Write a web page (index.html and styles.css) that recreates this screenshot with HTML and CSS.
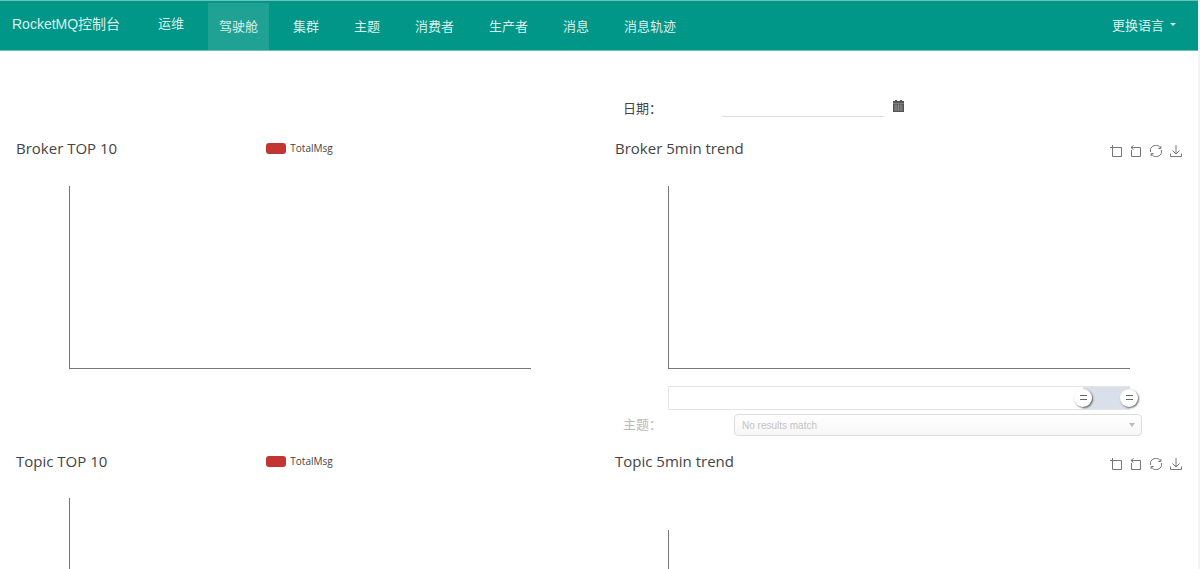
FILE: index.html
```html
<!DOCTYPE html>
<html lang="zh-CN">
<head>
    <meta charset="UTF-8">
    <meta name="viewport" content="width=device-width, initial-scale=1.0">
    <title>RocketMQ控制台</title>
    <link rel="stylesheet" href="styles.css">
</head>
<body>

<svg class="icon-defs" aria-hidden="true">
    <symbol id="icon-zoom" viewBox="0 0 12 12">
        <path d="M0 2.5h11.5v9h-9V0"/>
    </symbol>
    <symbol id="icon-back" viewBox="0 0 12 12">
        <path d="M1.5 5v6.5h9v-9H1M3.5 0.5l-2.5 2 2.5 2"/>
    </symbol>
    <symbol id="icon-restore" viewBox="0 0 12 12">
        <path d="M0.6 7A5.4 5.4 0 0 1 10.6 3.2M11.4 5A5.4 5.4 0 0 1 1.4 8.8M8.4 3.5h2.4V1M3.6 8.5H1.2V11"/>
    </symbol>
    <symbol id="icon-save" viewBox="0 0 12 12">
        <path d="M6 0v8.5M2.5 5.5L6 9l3.5-3.5M0.5 8.5v3h11v-3"/>
    </symbol>
</svg>

<nav class="navbar">
    <a class="brand" href="#">RocketMQ控制台</a>
    <ul class="nav-list">
        <li><a class="nav-link nav-ops" href="#">运维</a></li>
        <li><a class="nav-link active" href="#">驾驶舱</a></li>
        <li><a class="nav-link" href="#">集群</a></li>
        <li><a class="nav-link" href="#">主题</a></li>
        <li><a class="nav-link" href="#">消费者</a></li>
        <li><a class="nav-link" href="#">生产者</a></li>
        <li><a class="nav-link" href="#">消息</a></li>
        <li><a class="nav-link" href="#">消息轨迹</a></li>
    </ul>
    <button class="lang-button" type="button">更换语言<span class="caret"></span></button>
</nav>

<main class="dashboard">
    <form class="date-form">
        <label for="date">日期：</label>
        <input id="date" class="date-input" type="text">
        <button class="date-button" type="button" aria-label="日期">
            <svg viewBox="0 0 11 12">
                <path class="cal-body" d="M0 1h2V0h2v1h3V0h2v1h2v11H0z"/>
                <path class="cal-lines" d="M0 3.5h11M1 6h9M1 8h9M1 10h9M3 4v7M5.5 4v7M8 4v7"/>
            </svg>
        </button>
    </form>

    <div class="row">
        <section class="chart">
            <div class="chart-head">
                <h2>Broker TOP 10</h2>
                <span class="legend">TotalMsg</span>
            </div>
            <div class="plot"></div>
        </section>

        <section class="chart">
            <div class="chart-head">
                <h2>Broker 5min trend</h2>
                <div class="toolbox">
                    <button type="button" aria-label="Zoom"><svg><use href="#icon-zoom"/></svg></button>
                    <button type="button" aria-label="Zoom reset"><svg><use href="#icon-back"/></svg></button>
                    <button type="button" aria-label="Restore"><svg><use href="#icon-restore"/></svg></button>
                    <button type="button" aria-label="Save"><svg><use href="#icon-save"/></svg></button>
                </div>
            </div>
            <div class="plot"></div>
            <div class="data-zoom">
                <div class="data-zoom-range"></div>
                <input type="range" min="0" max="100" value="90" aria-label="Start">
                <input type="range" min="0" max="100" value="100" aria-label="End">
            </div>
            <form class="topic-form">
                <label for="topic">主题：</label>
                <div class="select-wrap">
                    <select id="topic" disabled>
                        <option>No results match</option>
                    </select>
                </div>
            </form>
        </section>
    </div>

    <div class="row row-fill">
        <section class="chart">
            <div class="chart-head">
                <h2>Topic TOP 10</h2>
                <span class="legend">TotalMsg</span>
            </div>
            <div class="plot plot-open"></div>
        </section>

        <section class="chart">
            <div class="chart-head">
                <h2>Topic 5min trend</h2>
                <div class="toolbox">
                    <button type="button" aria-label="Zoom"><svg><use href="#icon-zoom"/></svg></button>
                    <button type="button" aria-label="Zoom reset"><svg><use href="#icon-back"/></svg></button>
                    <button type="button" aria-label="Restore"><svg><use href="#icon-restore"/></svg></button>
                    <button type="button" aria-label="Save"><svg><use href="#icon-save"/></svg></button>
                </div>
            </div>
            <div class="plot plot-open plot-low"></div>
        </section>
    </div>
</main>

</body>
</html>
```
FILE: styles.css
```css
* {
    box-sizing: border-box;
}

body {
    display: flex;
    flex-direction: column;
    min-height: 100vh;
    margin: 0;
    border-right: 2px solid #f1f5f7;
    background-color: #fff;
    color: #444;
    font-family: "Liberation Sans", "Noto Sans CJK SC", sans-serif;
    font-size: 13px;
}

button {
    padding: 0;
    border: none;
    background: none;
    font: inherit;
    color: inherit;
    cursor: pointer;
}

.icon-defs {
    display: none;
}

/* Navbar */
.navbar {
    display: flex;
    height: 51px;
    padding: 0 22px 0 12px;
    border-top: 1px solid #6fc0b8;
    border-bottom: 1px solid #6fc0b8;
    background-color: #009688;
    color: #d9efed;
}

.brand {
    width: 135px;
    color: inherit;
    font-size: 14px;
    line-height: 46px;
    text-decoration: none;
    white-space: nowrap;
}

.nav-list {
    display: flex;
    flex: 1;
    gap: 13px;
    margin: 0;
    padding: 0;
    list-style: none;
}

.nav-link {
    display: block;
    margin-top: 2px;
    padding: 0 11px;
    color: inherit;
    line-height: 47px;
    text-decoration: none;
    white-space: nowrap;
}

.nav-link.nav-ops {
    margin-top: 0;
    line-height: 46px;
}

.nav-link.active {
    background-color: #1fa194;
}

.lang-button {
    display: flex;
    align-items: center;
    gap: 6px;
    height: 46px;
}

.caret {
    border-top: 3px solid currentColor;
    border-left: 3px solid transparent;
    border-right: 3px solid transparent;
}

/* Dashboard */
.dashboard {
    display: flex;
    flex: 1;
    flex-direction: column;
}

.date-form {
    display: flex;
    align-items: flex-end;
    height: 66px;
    margin-left: 50%;
    padding-left: 24px;
}

.date-form label,
.topic-form label {
    line-height: 16px;
}

.date-form label {
    width: 99px;
}

.date-input {
    width: 162px;
    height: 22px;
    padding: 0;
    border: none;
    border-bottom: 1px solid #ddd;
    outline: none;
    font: inherit;
}

.date-button {
    align-self: flex-end;
    height: 12px;
    margin: 0 0 5px 9px;
}

.date-button svg {
    display: block;
    width: 11px;
    height: 12px;
}

.cal-body {
    fill: #555;
}

.cal-lines {
    fill: none;
    stroke: #aaa;
    stroke-width: 0.5;
}

.row {
    display: grid;
    grid-template-columns: 1fr 1fr;
    padding-top: 21px;
}

.row-fill {
    flex: 1;
    padding-top: 15px;
}

.chart {
    display: flex;
    flex-direction: column;
}

.chart-head {
    display: grid;
    grid-template-columns: 1fr auto 1fr;
    align-items: center;
    height: 20px;
    padding: 0 16px;
}

.chart-head h2 {
    margin: 0;
    font-family: "Open Sans", "Noto Sans", sans-serif;
    font-size: 15px;
    font-weight: 400;
    line-height: 20px;
    white-space: nowrap;
}

.legend {
    display: flex;
    align-items: center;
    gap: 4px;
    font-family: "Open Sans", "Noto Sans", sans-serif;
    font-size: 10px;
}

.legend::before {
    content: "";
    width: 20px;
    height: 11px;
    border-radius: 3px;
    background-color: #c23531;
}

.toolbox {
    display: flex;
    grid-column: 3;
    gap: 8px;
    justify-content: flex-end;
    padding-top: 5px;
}

.toolbox svg {
    display: block;
    width: 12px;
    height: 12px;
    fill: none;
    stroke: #777;
}

.plot {
    height: 183px;
    margin: 28px 68px 0 69px;
    border-left: 1px solid #777;
    border-bottom: 1px solid #777;
}

.plot-open {
    flex: 1;
    margin-top: 27px;
    border-bottom: none;
}

.plot-low {
    margin-top: 59px;
}

/* Zoom slider under the trend chart */
.data-zoom {
    position: relative;
    height: 24px;
    margin: 17px 68px 0 69px;
    border: 1px solid #e4e4e4;
}

.data-zoom-range {
    width: 10%;
    height: 100%;
    margin-left: auto;
    background-color: #dae0e9;
}

.data-zoom input {
    position: absolute;
    top: 2px;
    left: -9px;
    width: calc(100% + 18px);
    height: 18px;
    margin: 0;
    background: none;
    pointer-events: none;
    appearance: none;
}

.data-zoom input::-webkit-slider-thumb {
    width: 18px;
    height: 18px;
    border-radius: 50%;
    background:
        linear-gradient(#666, #666) center 6px / 7px 1px no-repeat,
        linear-gradient(#666, #666) center 10px / 7px 1px no-repeat,
        #fff;
    box-shadow: 1px 1px 2px rgba(0, 0, 0, 0.6);
    pointer-events: auto;
    appearance: none;
}

.topic-form {
    display: flex;
    align-items: center;
    margin-top: 4px;
    padding: 0 56px 0 24px;
    color: #bbb;
}

.topic-form label {
    width: 111px;
}

.select-wrap {
    display: grid;
    flex: 1;
    align-items: center;
}

.select-wrap select,
.select-wrap::after {
    grid-area: 1 / 1;
}

.select-wrap select {
    height: 22px;
    padding: 0 7px;
    border: 1px solid #ddd;
    border-radius: 4px;
    background: linear-gradient(#fff, #f6f6f6);
    color: #c4c4c4;
    font-family: "Liberation Sans", sans-serif;
    font-size: 10px;
    opacity: 1;
    appearance: none;
}

.select-wrap::after {
    content: "";
    justify-self: end;
    margin-right: 7px;
    border-top: 4px solid #bbb;
    border-left: 3px solid transparent;
    border-right: 3px solid transparent;
    pointer-events: none;
}
```
